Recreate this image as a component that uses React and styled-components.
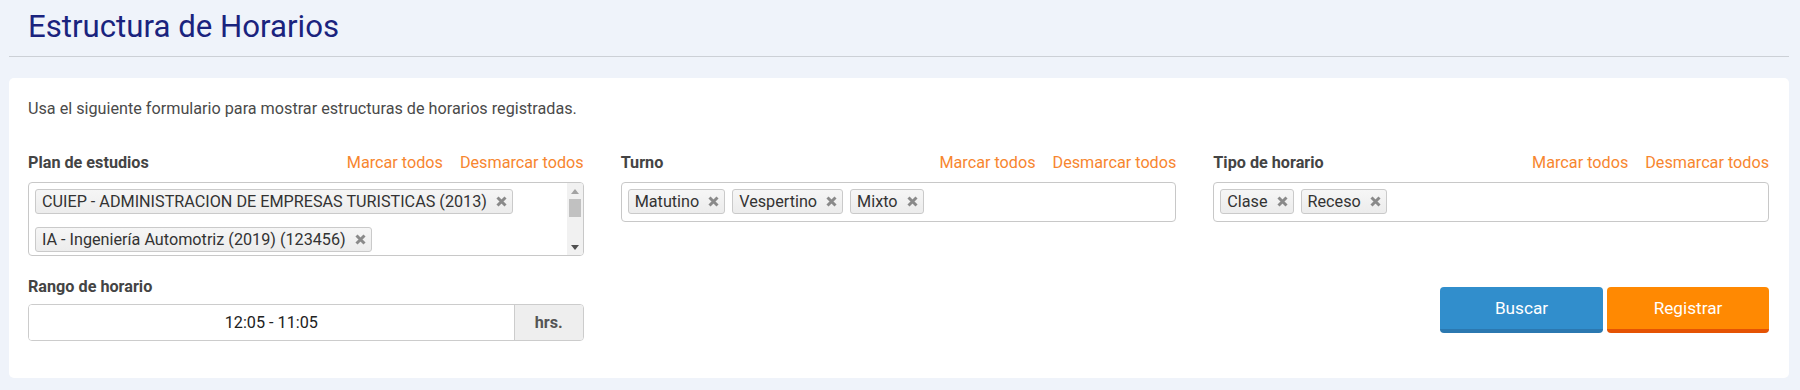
import React from "react";
import styled, { createGlobalStyle } from "styled-components";

const Global = createGlobalStyle`
  html, body { margin: 0; padding: 0; }
  body {
    background: #eff3fa;
    font-family: Roboto, "Noto Sans", Arial, sans-serif;
    font-size: 16.2px;
    color: #444;
  }
  * { box-sizing: border-box; }
`;

const Page = styled.div`
  padding: 0 11px 0 9px;
`;

const Header = styled.header`
  padding: 8px 19px 10px;
  border-bottom: 1px solid #ccd0d6;
`;

const Title = styled.h1`
  margin: 0;
  font-size: 31.2px;
  line-height: 38px;
  font-weight: 400;
  color: #1a237e;
`;

const Card = styled.section`
  margin-top: 21px;
  background: #fff;
  border-radius: 5px;
  padding: 21px 20px 37px 19px;
`;

const Intro = styled.p`
  margin: 0 0 33px;
  font-size: 16.2px;
  line-height: 20px;
  color: #4a4a4a;
`;

const Grid = styled.div`
  display: grid;
  grid-template-columns: repeat(3, 1fr);
  column-gap: 37px;
  row-gap: 20px;
  align-items: start;
`;

const Field = styled.div`
  display: flex;
  flex-direction: column;
`;

const LabelRow = styled.div`
  display: flex;
  align-items: center;
  justify-content: space-between;
  height: 20px;
  margin-bottom: ${(p) => p.$gap ?? 10}px;
`;

const Label = styled.label`
  font-weight: 700;
  font-size: 16.2px;
  color: #444;
`;

const Links = styled.div`
  display: flex;
  gap: 17px;
`;

const LinkBtn = styled.a`
  color: #f7862f;
  font-size: 16.2px;
  cursor: pointer;
`;

const SelectBox = styled.div`
  display: flex;
  border: 1px solid #c8c8c8;
  border-radius: 4px;
  background: #fff;
  height: ${(p) => (p.$tall ? "74px" : "40px")};
  overflow: hidden;
`;

const TagList = styled.div`
  flex: 1;
  display: flex;
  flex-wrap: wrap;
  align-content: flex-start;
  column-gap: 7px;
  row-gap: 13px;
  padding: 6px 6px 0 6px;
`;

const Tag = styled.span`
  display: inline-flex;
  align-items: center;
  height: 25px;
  padding: 0 5px 0 6px;
  gap: 9px;
  border: 1px solid #cacaca;
  border-radius: 3px;
  background: linear-gradient(#f6f6f6, #ececec);
  color: #333;
  font-size: 16.2px;
  white-space: nowrap;
`;

const Remove = styled.svg`
  width: 11px;
  height: 11px;
  flex: none;
`;

const Scrollbar = styled.div`
  width: 16px;
  flex: none;
  display: flex;
  flex-direction: column;
  background: #f1f1f1;
`;

const Arrow = styled.div`
  height: 16px;
  display: flex;
  align-items: center;
  justify-content: center;
`;

const Track = styled.div`
  flex: 1;
  padding: 0 2px;
`;

const Thumb = styled.div`
  height: 18px;
  background: #c1c1c1;
`;

const InputGroup = styled.div`
  display: flex;
  height: 37px;
  border: 1px solid #cccccc;
  border-radius: 4px;
  overflow: hidden;
`;

const TimeInput = styled.input`
  flex: 1;
  min-width: 0;
  border: none;
  outline: none;
  text-align: center;
  font-family: Roboto, Arial, sans-serif;
  font-size: 16.2px;
  color: #222;
  background: #fff;
`;

const Addon = styled.span`
  width: 69px;
  flex: none;
  display: flex;
  align-items: center;
  justify-content: center;
  background: #eeeeee;
  border-left: 1px solid #cccccc;
  font-weight: 700;
  color: #555;
`;

const Actions = styled.div`
  display: flex;
  justify-content: flex-end;
  gap: 4px;
  margin-top: 11px;
`;

const Button = styled.button`
  width: ${(p) => p.$w}px;
  height: 46px;
  border: none;
  border-bottom: 4px solid ${(p) => p.$shade};
  border-radius: 4px;
  background: ${(p) => p.$bg};
  color: #fff;
  font-family: Roboto, Arial, sans-serif;
  font-size: 17.2px;
  padding: 0;
  cursor: pointer;
`;

const X = () => (
  <Remove viewBox="0 0 11 11">
    <path d="M1.5 1.5 L9.5 9.5 M9.5 1.5 L1.5 9.5" stroke="#8a8a8a" strokeWidth="3" />
  </Remove>
);

const Tags = ({ items }) =>
  items.map((t) => (
    <Tag key={t}>
      {t}
      <X />
    </Tag>
  ));

const Head = ({ label }) => (
  <LabelRow>
    <Label>{label}</Label>
    <Links>
      <LinkBtn>Marcar todos</LinkBtn>
      <LinkBtn>Desmarcar todos</LinkBtn>
    </Links>
  </LabelRow>
);

export default function App() {
  return (
    <>
      <Global />
      <Page>
        <Header>
          <Title>Estructura de Horarios</Title>
        </Header>
        <Card>
          <Intro>Usa el siguiente formulario para mostrar estructuras de horarios registradas.</Intro>
          <Grid>
            <Field>
              <Head label="Plan de estudios" />
              <SelectBox $tall>
                <TagList>
                  <Tags
                    items={[
                      "CUIEP - ADMINISTRACION DE EMPRESAS TURISTICAS (2013)",
                      "IA - Ingeniería Automotriz (2019) (123456)",
                    ]}
                  />
                </TagList>
                <Scrollbar>
                  <Arrow>
                    <svg width="8" height="5" viewBox="0 0 8 5">
                      <path d="M0 5 L4 0 L8 5 Z" fill="#a3a3a3" />
                    </svg>
                  </Arrow>
                  <Track>
                    <Thumb />
                  </Track>
                  <Arrow>
                    <svg width="8" height="5" viewBox="0 0 8 5">
                      <path d="M0 0 L8 0 L4 5 Z" fill="#505050" />
                    </svg>
                  </Arrow>
                </Scrollbar>
              </SelectBox>
            </Field>
            <Field>
              <Head label="Turno" />
              <SelectBox>
                <TagList>
                  <Tags items={["Matutino", "Vespertino", "Mixto"]} />
                </TagList>
              </SelectBox>
            </Field>
            <Field>
              <Head label="Tipo de horario" />
              <SelectBox>
                <TagList>
                  <Tags items={["Clase", "Receso"]} />
                </TagList>
              </SelectBox>
            </Field>
            <Field>
              <LabelRow $gap={8}>
                <Label>Rango de horario</Label>
              </LabelRow>
              <InputGroup>
                <TimeInput defaultValue="12:05 - 11:05" />
                <Addon>hrs.</Addon>
              </InputGroup>
            </Field>
            <div />
            <Actions>
              <Button $w={163} $bg="#318ecc" $shade="#2b78b0">Buscar</Button>
              <Button $w={162} $bg="#ff8902" $shade="#e55304">Registrar</Button>
            </Actions>
          </Grid>
        </Card>
      </Page>
    </>
  );
}
